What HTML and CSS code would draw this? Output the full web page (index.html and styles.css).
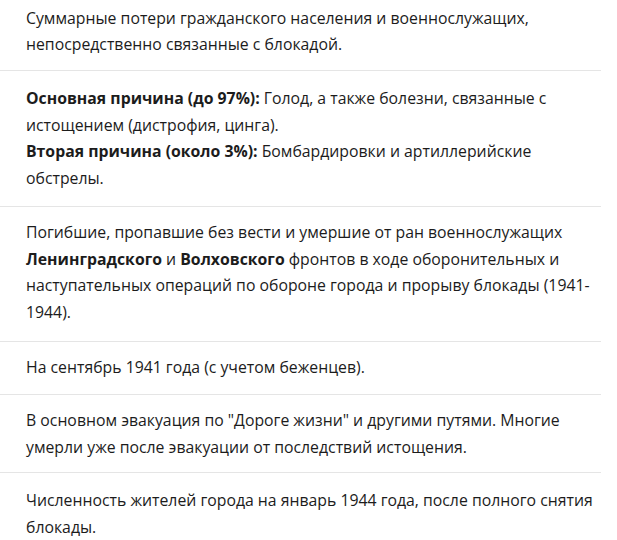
FILE: index.html
```html
<!DOCTYPE html>
<html lang="ru">
<head>
<meta charset="utf-8">
<link rel="stylesheet" href="styles.css">
</head>
<body>
<div class="list">
  <div class="row row-1">Суммарные потери гражданского населения и военнослужащих,<br>непосредственно связанные с блокадой.</div>
  <div class="row row-2"><b>Основная причина (до 97%):</b> Голод, а также болезни, связанные с<br>истощением (дистрофия, цинга).<br><b>Вторая причина (около 3%):</b> Бомбардировки и артиллерийские<br>обстрелы.</div>
  <div class="row row-3">Погибшие, пропавшие без вести и умершие от ран военнослужащих<br><b>Ленинградского</b> и <b>Волховского</b> фронтов в ходе оборонительных и<br>наступательных операций по обороне города и прорыву блокады (1941-<br>1944).</div>
  <div class="row row-4">На сентябрь 1941 года (с учетом беженцев).</div>
  <div class="row row-5">В основном эвакуация по "Дороге жизни" и другими путями. Многие<br>умерли уже после эвакуации от последствий истощения.</div>
  <div class="row row-6">Численность жителей города на январь 1944 года, после полного снятия<br>блокады.</div>
</div>
</body>
</html>
```

FILE: styles.css
```css
html, body {
  margin: 0;
  padding: 0;
  background: #ffffff;
}
body {
  font-family: "Open Sans", "Noto Sans", sans-serif;
  font-size: 15.8px;
  line-height: 26.67px;
  color: #1c1c1c;
}
.list {
  width: 601px;
  margin-top: -7.3px;
}
.row {
  padding: 12px 0 12px 26px;
  border-bottom: 1px solid #e5e5e5;
  white-space: nowrap;
}
.row-2 {
  padding-top: 14px;
  padding-bottom: 14.3px;
}
.row-3 {
  padding-bottom: 15.3px;
}
.row-4 {
  padding-bottom: 13.3px;
}
.row-5 {
  padding-bottom: 11.7px;
}
.row-6 {
  padding-top: 14px;
  border-bottom: none;
}
b {
  font-weight: 700;
}
```
